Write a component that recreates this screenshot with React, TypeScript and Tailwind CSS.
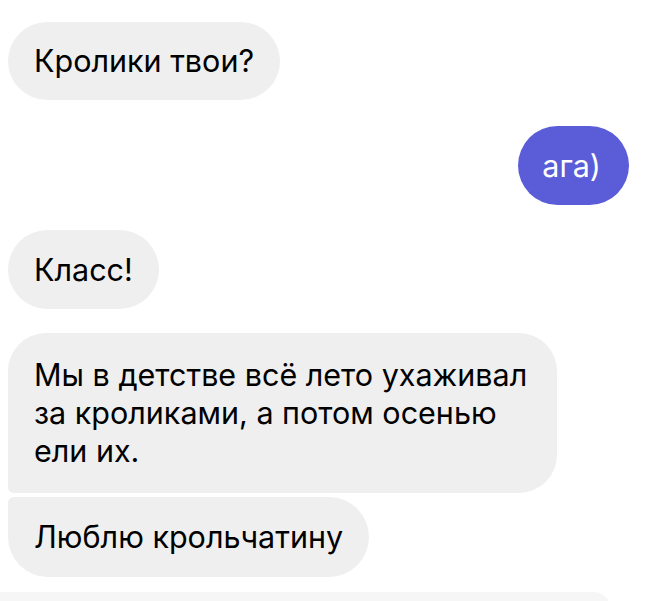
const font = { fontFamily: 'Inter, "Noto Sans", sans-serif' };

function Incoming({ children, className = '' }: { children: React.ReactNode; className?: string }) {
  return (
    <div className={`bg-[#efefef] text-black text-[30.5px] leading-[38px] px-[26px] flex items-center ${className}`}>
      {children}
    </div>
  );
}

export default function App() {
  return (
    <div className="w-[645px] h-[601px] bg-white overflow-hidden flex flex-col" style={font}>
      <div className="flex flex-col items-start px-[8px] pt-[22px]">
        <Incoming className="rounded-full h-[78px]">Кролики твои?</Incoming>

        <div className="self-end mr-[8px] mt-[26px] h-[79px] flex items-center bg-[#5b5cd8] text-white text-[30.5px] leading-[38px] pl-[24px] pr-[28px] rounded-full">
          ага)
        </div>

        <Incoming className="rounded-full h-[79px] mt-[25px]">Класс!</Incoming>

        <Incoming className="mt-[24px] w-[549px] h-[160px] rounded-[38px] rounded-bl-[6px]">
          Мы в детстве всё лето ухаживал за кроликами, а потом осенью ели их.
        </Incoming>

        <Incoming className="mt-[4px] h-[80px] rounded-[40px] rounded-tl-[6px]">Люблю крольчатину</Incoming>
      </div>
      <div className="mt-[15px] w-[610px] h-[20px] shrink-0 bg-[#f6f6f6] rounded-tr-[16px]" />
    </div>
  );
}
